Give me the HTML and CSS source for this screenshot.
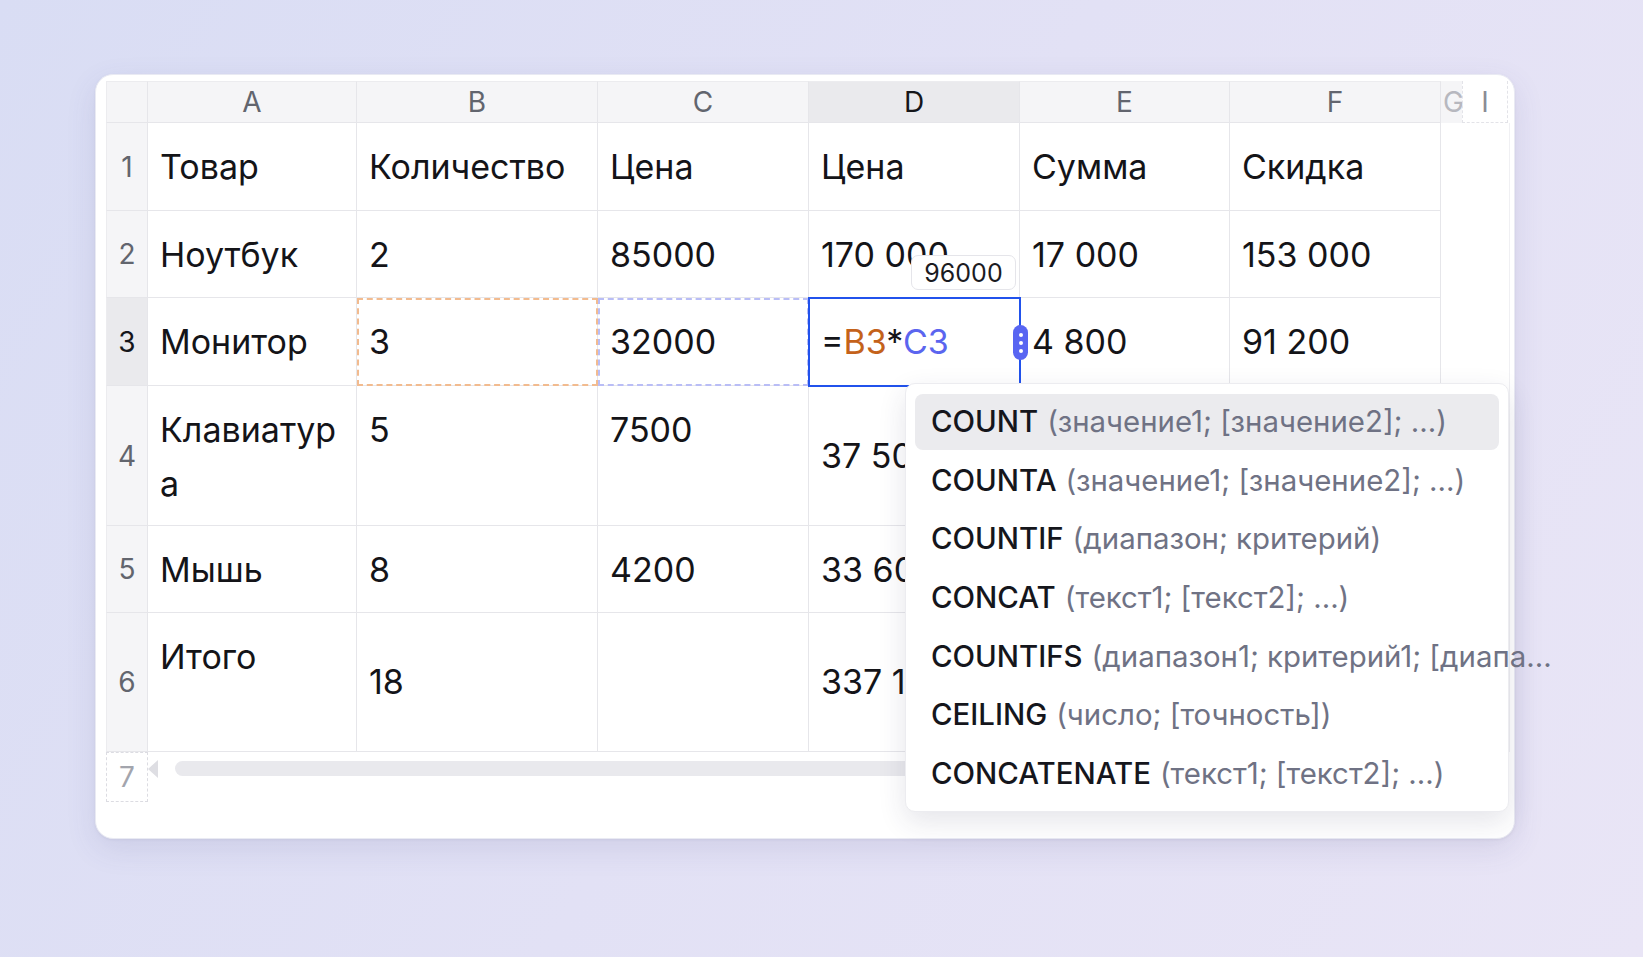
FILE: index.html
```html
<!DOCTYPE html>
<html lang="ru">
<head>
  <meta charset="UTF-8" />
  <meta name="viewport" content="width=device-width, initial-scale=1.0"/>
  <title>Таблица — подсказки формул</title>
  <link rel="stylesheet" href="styles.css">
</head>
<body>
  <div class="stage">
    <div class="card">

      <!-- сетка таблицы -->
      <div class="sheet">
        <div class="corner"></div>
        <div class="col-head">A</div>
        <div class="col-head">B</div>
        <div class="col-head">C</div>
        <div class="col-head active">D</div>
        <div class="col-head">E</div>
        <div class="col-head">F</div>
        <div class="col-head extra"><span class="g">G</span><span class="i">I</span></div>

        <div class="row-head">1</div>
        <div class="cell">Товар</div>
        <div class="cell">Количество</div>
        <div class="cell">Цена</div>
        <div class="cell">Цена</div>
        <div class="cell">Сумма</div>
        <div class="cell">Скидка</div>
        <div class="cell blank"></div>

        <div class="row-head">2</div>
        <div class="cell">Ноутбук</div>
        <div class="cell">2</div>
        <div class="cell">85000</div>
        <div class="cell">170 000</div>
        <div class="cell">17 000</div>
        <div class="cell">153 000</div>
        <div class="cell blank"></div>

        <div class="row-head active">3</div>
        <div class="cell">Монитор</div>
        <div class="cell ref-b">3</div>
        <div class="cell ref-c">32000</div>
        <div class="cell editing">=<span class="tok-b">B3</span>*<span class="tok-c">C3</span></div>
        <div class="cell">4 800</div>
        <div class="cell">91 200</div>
        <div class="cell blank"></div>

        <div class="row-head">4</div>
        <div class="cell wrap">Клавиатура</div>
        <div class="cell">5</div>
        <div class="cell">7500</div>
        <div class="cell mid">37 500</div>
        <div class="cell"></div>
        <div class="cell"></div>
        <div class="cell blank"></div>

        <div class="row-head">5</div>
        <div class="cell">Мышь</div>
        <div class="cell">8</div>
        <div class="cell">4200</div>
        <div class="cell">33 600</div>
        <div class="cell"></div>
        <div class="cell"></div>
        <div class="cell blank"></div>

        <div class="row-head">6</div>
        <div class="cell">Итого</div>
        <div class="cell mid">18</div>
        <div class="cell"></div>
        <div class="cell mid">337 100</div>
        <div class="cell"></div>
        <div class="cell"></div>
        <div class="cell blank"></div>

        <div class="row-head ghost">7</div>
        <div class="scroll-row">
          <span class="scroll-arrow"></span>
          <span class="scroll-track"></span>
        </div>
      </div>

      <!-- подсказка значения -->
      <div class="value-tip">96000</div>
      <div class="fill-handle"><i></i><i></i><i></i></div>

      <!-- список функций -->
      <ul class="suggest">
        <li class="hover"><b>COUNT</b> (значение1; [значение2]; ...)</li>
        <li><b>COUNTA</b> (значение1; [значение2]; ...)</li>
        <li><b>COUNTIF</b> (диапазон; критерий)</li>
        <li><b>CONCAT</b> (текст1; [текст2]; ...)</li>
        <li><b>COUNTIFS</b> (диапазон1; критерий1; [диапа...</li>
        <li><b>CEILING</b> (число; [точность])</li>
        <li><b>CONCATENATE</b> (текст1; [текст2]; ...)</li>
      </ul>

    </div>
  </div>
</body>
</html>
```

FILE: styles.css
```css
/* фон страницы */
* { box-sizing: border-box; }
html, body {
  margin: 0; padding: 0;
}
body {
  width: 1643px;
  height: 957px;
  overflow: hidden;
  font-family: Inter, "Noto Sans", sans-serif;
  color: #141418;
  background: linear-gradient(120deg, #d9ddf4 0%, #e2e1f5 50%, #e9e5f6 100%);
}
.stage {
  padding: 74px 0 0 95px;
}

/* белая карточка */
.card {
  position: relative;
  width: 1420px;
  height: 765px;
  padding: 6px 4px 0 10px;
  background: #fff;
  border: 1px solid #e9eaf3;
  border-radius: 18px;
  box-shadow: 0 10px 30px rgba(70, 70, 140, 0.12), 0 1px 3px rgba(0, 0, 0, 0.05);
}

/* сетка */
.sheet {
  display: grid;
  grid-template-columns: 42px 209px 241px 211px 211px 210px 211px 1fr;
  grid-template-rows: 42px 88px 87px 88px 140px 87px 139px 50px;
}
.corner, .col-head, .row-head {
  background: #f5f5f7;
  border-right: 1px solid #e6e6ea;
  border-bottom: 1px solid #e6e6ea;
}
.corner, .col-head { border-top: 1px solid #ececef; }
.corner, .row-head { border-left: 1px solid #ececef; }
.col-head {
  display: flex;
  align-items: center;
  justify-content: center;
  font-size: 28px;
  color: #62656e;
}
.col-head.active {
  background: #eaeaed;
  color: #15161a;
}
.col-head.extra {
  justify-content: flex-start;
  background: none;
  border: none;
}
.col-head.extra .g {
  width: 21px;
  padding-left: 2px;
  color: #b7b8bf;
  background: #f5f5f7;
  height: 100%;
  display: flex;
  align-items: center;
}
.col-head.extra .i {
  flex: 1;
  height: 100%;
  display: flex;
  align-items: center;
  justify-content: center;
  color: #8a8c95;
  border: 1.5px dashed #e3e3e8;
  border-top: none;
  margin-right: 2px;
}
.row-head {
  display: flex;
  align-items: center;
  justify-content: center;
  font-size: 28px;
  color: #62656e;
}
.row-head.active {
  background: #eaeaed;
  color: #15161a;
}
.row-head.ghost {
  background: none;
  border: 1.5px dashed #dcdce2;
  color: #a3a5ad;
}

.cell {
  padding: 17px 12px;
  font-size: 34px;
  line-height: 54px;
  white-space: nowrap;
  border-right: 1px solid #e6e6ea;
  border-bottom: 1px solid #e6e6ea;
  background: #fff;
}
.cell.wrap {
  white-space: normal;
  word-break: break-all;
}
.cell.mid {
  display: flex;
  align-items: center;
}
.cell.blank {
  border-bottom: none;
  border-right: 1px solid #f0f0f3;
}

/* ссылки формулы */
.cell.ref-b {
  outline: 2px dashed #f2bb8f;
  outline-offset: -2px;
}
.cell.ref-c {
  outline: 2px dashed #b9bdf6;
  outline-offset: -2px;
}
.cell.editing {
  position: relative;
  z-index: 2;
  outline: 2px solid #2152ec;
  outline-offset: -1px;
}
.tok-b { color: #c4621a; }
.tok-c { color: #5b65ef; }

/* полоса прокрутки */
.scroll-row {
  grid-column: 2 / -1;
  display: flex;
  align-items: flex-start;
  padding-top: 9px;
}
.scroll-arrow {
  width: 0; height: 0;
  margin-top: -1px;
  border-top: 9px solid transparent;
  border-bottom: 9px solid transparent;
  border-right: 10px solid #dedee3;
}
.scroll-track {
  width: 1100px;
  height: 15px;
  margin-left: 17px;
  border-radius: 8px;
  background: #e9e9ed;
}

/* подсказка значения над ячейкой */
.value-tip {
  position: absolute;
  left: 815px;
  top: 180px;
  width: 105px;
  height: 35px;
  display: flex;
  align-items: center;
  justify-content: center;
  font-size: 25px;
  color: #1b1b1f;
  background: #fff;
  border: 1px solid #e5e5ea;
  border-radius: 7px;
  z-index: 3;
}
.fill-handle {
  position: absolute;
  left: 917px;
  top: 250px;
  width: 15px;
  height: 35px;
  border-radius: 8px;
  background: #5865f2;
  display: flex;
  flex-direction: column;
  align-items: center;
  justify-content: center;
  gap: 4px;
  z-index: 4;
}
.fill-handle i {
  width: 4px;
  height: 4px;
  border-radius: 50%;
  background: #fff;
}

/* выпадающий список функций */
.suggest {
  position: absolute;
  left: 809px;
  top: 308px;
  width: 604px;
  height: 429px;
  margin: 0;
  padding: 10px 9px;
  list-style: none;
  display: flex;
  flex-direction: column;
  gap: 3px;
  background: #fff;
  border: 1px solid #ececf0;
  border-radius: 10px;
  box-shadow: 0 10px 28px rgba(40, 40, 80, 0.12);
  z-index: 5;
}
.suggest li {
  height: 56px;
  padding-left: 16px;
  display: flex;
  align-items: center;
  font-size: 29.4px;
  white-space: nowrap;
  color: #6f7284;
  border-radius: 8px;
}
.suggest li b {
  font-weight: 500;
  color: #15161c;
  margin-right: 9px;
}
.suggest li.hover {
  background: #ebebee;
}
```
